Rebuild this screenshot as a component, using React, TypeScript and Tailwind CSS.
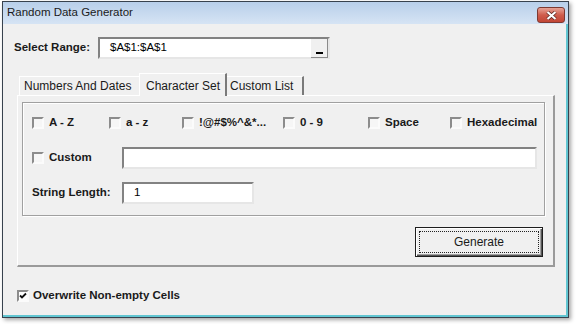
import React from 'react';

const font = "font-['Liberation_Sans',Arial,sans-serif]";

const Check: React.FC<{ checked?: boolean }> = ({ checked }) => (
  <span
    className={`flex h-[12px] w-[12px] shrink-0 items-center justify-center border-2 border-t-[#8c8c8c] border-l-[#8c8c8c] border-r-[#fbfbfb] border-b-[#fbfbfb] ${
      checked ? 'bg-white' : 'bg-[#f6f6f6]'
    }`}
  >
    {checked && (
      <svg width="8" height="8" viewBox="0 0 8 8">
        <path d="M1 3.5 L3 5.5 L7 1.5" stroke="#111" strokeWidth="1.8" fill="none" />
      </svg>
    )}
  </span>
);

const Option: React.FC<{ label: string; w?: string; checked?: boolean }> = ({ label, w = '', checked }) => (
  <div className={`flex items-center gap-[5px] ${w}`}>
    <Check checked={checked} />
    <span className="text-[11.5px] font-bold text-[#1a1a1a]">{label}</span>
  </div>
);

const Field: React.FC<{ w: string; value?: string; children?: React.ReactNode }> = ({ w, value, children }) => (
  <div
    className={`flex h-[22px] items-center border-2 border-t-[#828282] border-l-[#828282] border-r-[#e6e6e6] border-b-[#e6e6e6] bg-white ${w}`}
  >
    <span className="flex-1 pl-[10px] text-[11.5px] text-black">{value}</span>
    {children}
  </div>
);

const App: React.FC = () => {
  return (
    <div className={`h-[324px] w-[576px] bg-white pl-[2px] pt-[1px] ${font}`}>
      <div className="flex h-[317px] w-[567px] flex-col border border-[#38424e] bg-[#f0f0f0] shadow-[2px_2px_4px_rgba(0,0,0,0.35)]">
        {/* title bar */}
        <div className="flex h-[22px] items-center justify-between bg-gradient-to-b from-[#b8cfea] to-[#d6e4f4] pl-[4px] pr-[3px]">
          <span className="text-[11.5px] text-[#1b1b1b]">Random Data Generator</span>
          <div className="mt-[4px] flex h-[16px] w-[28px] items-center justify-center rounded-[3px] border border-[#7d3a33] bg-gradient-to-b from-[#e6a397] via-[#cf5c4c] to-[#c24534]">
            <svg width="11" height="9" viewBox="0 0 11 9">
              <path d="M1.5 1 L9.5 8 M9.5 1 L1.5 8" stroke="#5a2620" strokeWidth="3.6" />
              <path d="M1.5 1 L9.5 8 M9.5 1 L1.5 8" stroke="#ffffff" strokeWidth="2.2" />
            </svg>
          </div>
        </div>

        {/* body */}
        <div className="flex flex-1 flex-col border-r-2 border-b-2 border-[#62c6d2] pt-[13px]">
          <div className="flex h-[22px] items-center pl-[11px]">
            <span className="w-[84px] text-[11.5px] font-bold text-[#1a1a1a]">Select Range:</span>
            <Field w="w-[232px]" value="$A$1:$A$1">
              <div className="flex h-[19px] w-[17px] items-end justify-center border-r border-b border-[#8a8a8a] bg-[#f0f0f0] pb-[3px]">
                <div className="h-[2px] w-[7px] bg-black" />
              </div>
            </Field>
          </div>

          {/* tabs */}
          <div className="ml-[14px] mt-[14px] flex h-[22px] items-end">
            <div className="ml-[2px] flex h-[19px] w-[120px] items-center border-t border-l border-white pl-[4px] text-[12px] text-[#1a1a1a]">
              Numbers And Dates
            </div>
            <div className="relative z-10 -mb-px flex h-[23px] w-[88px] items-start border-t border-l border-r-2 border-t-white border-l-white border-r-[#7a7a7a] bg-[#f0f0f0] pl-[6px] pt-[3px] text-[12px] text-[#1a1a1a]">
              Character Set
            </div>
            <div className="flex h-[19px] w-[77px] items-center border-t border-r-2 border-t-white border-r-[#7a7a7a] pl-[3px] text-[12px] text-[#1a1a1a]">
              Custom List
            </div>
          </div>

          {/* panel */}
          <div className="ml-[14px] flex h-[172px] w-[538px] flex-col border-t border-l border-t-white border-l-white border-r-2 border-b-2 border-r-[#9a9a9a] border-b-[#9a9a9a]">
            <div className="ml-[4px] mt-[6px] flex h-[114px] w-[523px] flex-col border border-[#a0a0a0] pl-[9px] pt-[9px] shadow-[inset_1px_1px_0_#ffffff,1px_1px_0_#ffffff]">
              <div className="flex h-[22px] items-center">
                <Option label="A - Z" w="w-[77px]" />
                <Option label="a - z" w="w-[73px]" />
                <Option label="!@#$%^&*..." w="w-[101px]" />
                <Option label="0 - 9" w="w-[85px]" />
                <Option label="Space" w="w-[82px]" />
                <Option label="Hexadecimal" />
              </div>
              <div className="mt-[13px] flex h-[22px] items-center">
                <Option label="Custom" w="w-[90px]" />
                <Field w="w-[415px]" />
              </div>
              <div className="mt-[13px] flex h-[22px] items-center">
                <span className="w-[90px] text-[11.5px] font-bold text-[#1a1a1a]">String Length:</span>
                <Field w="w-[132px]" value="1" />
              </div>
            </div>
            <div className="mt-[11px] flex justify-end pr-[10px]">
              <button className="flex h-[30px] w-[128px] border border-[#1e1e1e] bg-[#f0f0f0] p-[3px] shadow-[inset_1px_1px_0_#ffffff,inset_-1px_-1px_0_#555555,inset_-2px_-2px_0_#a0a0a0]">
                <div className="flex flex-1 items-center justify-center border border-dotted border-[#222] text-[12px] text-[#1a1a1a]">
                  Generate
                </div>
              </button>
            </div>
          </div>

          <div className="ml-[14px] mt-[22px] flex h-[14px] items-center gap-[4px]">
            <Check checked />
            <span className="text-[11.5px] font-bold text-[#1a1a1a]">Overwrite Non-empty Cells</span>
          </div>
        </div>
      </div>
    </div>
  );
};

export default App;
